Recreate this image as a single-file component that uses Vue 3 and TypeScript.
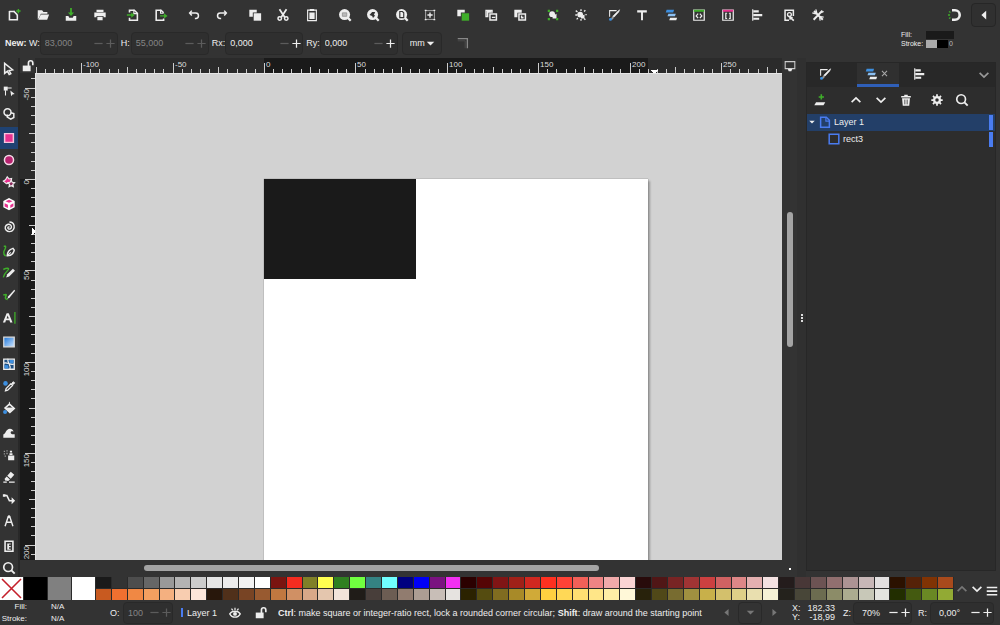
<script setup lang="ts">
import { computed, onBeforeUnmount, onMounted, ref } from 'vue'

const G = '#3fae2a'
const B = '#3d8fe0'
const P = '#e8318f'

const icons: Record<string, string> = {
  new: `<path d="M2.5 4h6M2.8 3.5v10h9v-6" fill="none" stroke="currentColor" stroke-width="1.8"/><path d="M7.5 3.5l4.3 4.3" stroke="currentColor" stroke-width="1.8"/><path d="M13 1v5M10.5 3.5h5" stroke="${G}" stroke-width="1.6"/>`,
  open: `<path d="M2 2.5h5l1.500 2H13v2H5.500L3.500 11 2 13z"/><path d="M5.500 7.500H15l-2.200 6H2.500z"/>`,
  save: `<path d="M7 0h2v5h2.500L8 9 4.500 5H7z" fill="${G}"/><path d="M2 9h3l1 2h4l1-2h3v5.500H2z"/>`,
  print: `<path d="M4 2h8v2.500H4zM1.500 5.200h13v5.300H12V9H4v1.500H1.500zM5 10h6v4H5z"/>`,
  import: `<path d="M4 5V2.500h5.500L13 6v8H4v-3" fill="none" stroke="currentColor" stroke-width="1.800"/><path d="M9 2v4.500h4" fill="none" stroke="currentColor" stroke-width="1.300"/><path d="M1 7.200h5V5l4 3-4 3V8.800H1z" fill="${G}"/>`,
  export: `<path d="M11 5.500L8 2.500H2.500V14H11v-2" fill="none" stroke="currentColor" stroke-width="1.800"/><path d="M7.500 2v4h3.500" fill="none" stroke="currentColor" stroke-width="1.300"/><path d="M7 8.200h4.500V6l4 3-4 3V9.800H7z" fill="${G}"/>`,
  undo: `<path d="M5.500 3L3 5.800l2.500 2.800M3.500 5.800h6.500a2.800 2.800 0 0 1 0 6.200H9" fill="none" stroke="currentColor" stroke-width="1.700"/>`,
  redo: `<path d="M10.500 3L13 5.800l-2.500 2.800M12.500 5.800H6a2.800 2.800 0 0 0 0 6.200h1" fill="none" stroke="currentColor" stroke-width="1.700"/>`,
  copy: `<path d="M1.500 2h8.500v3H5.500v5h-4z"/><path d="M6.500 6H15v8.500H6.500z"/>`,
  cut: `<path d="M4 1.500l6 9M12 1.500l-6 9" stroke="currentColor" stroke-width="2"/><circle cx="4.300" cy="12" r="2" fill="none" stroke="currentColor" stroke-width="1.700"/><circle cx="11.700" cy="12" r="2" fill="none" stroke="currentColor" stroke-width="1.700"/>`,
  paste: `<path d="M3 2.500h10v12H3z" fill="none" stroke="currentColor" stroke-width="1.300"/><path d="M5.500 1h5v2.500h-5zM5 5h6v7.500H5z"/>`,
  zoomSel: `<circle cx="7.500" cy="7.500" r="6.300"/><path d="M11 11l3.500 3.500" stroke="currentColor" stroke-width="2.600"/><path d="M5 5.500h5v4H5z" fill="#bbb" stroke="#888" stroke-width=".8"/>`,
  zoomDraw: `<circle cx="7.500" cy="7.500" r="6.300"/><path d="M11 11l3.500 3.500" stroke="currentColor" stroke-width="2.600"/><path d="M4 8l3-3.500h3.500L9 8l1.500.500L8 11.500 7 9z" fill="#333"/>`,
  zoomPage: `<circle cx="7.500" cy="7.500" r="6.300"/><path d="M11 11l3.500 3.500" stroke="currentColor" stroke-width="2.600"/><path d="M5.500 4h3l1.500 1.500V11H5.500z" fill="none" stroke="#333" stroke-width="1.300"/>`,
  zoomCenter: `<path d="M3 3h10v10H3z" fill="none" stroke="#bbb" stroke-width="1"/><path d="M8 5v6M5 8h6" stroke="currentColor" stroke-width="1.600"/><path d="M2 2h2v1.500H2zM12 2h2v1.500h-2zM2 12.500h2V14H2zM12 12.500h2V14h-2z"/>`,
  dup: `<path d="M1.500 2H10v3H5.500v4.500h-4z"/><path d="M6.500 6H15v8.500H6.500z" fill="${G}"/>`,
  clone: `<path d="M1.500 2H10v3.500H9V3.500H3V9h2v1.500H1.500z"/><path d="M6.800 6.800h7.400v7H6.800z" fill="none" stroke="currentColor" stroke-width="1.700"/><path d="M9 10h4v1.500H9zM3 3.500h6v2H5V9H3z"/>`,
  unclone: `<path d="M1.500 2H10v3.500H5V10.500H1.500z"/><path d="M6.800 6.800h7.400v7H6.800z" fill="none" stroke="currentColor" stroke-width="1.700"/><path d="M9 8.500h1.500V10H12v2H9z"/>`,
  group: `<circle cx="7" cy="7" r="3.300"/><path d="M7.500 9L12 6.500v5.500H7.500z"/><path d="M2 2h2.500v2.500H2zM11.500 2H14v2.500h-2.500zM2 11.500h2.500V14H2zM11.500 11.500H14V14h-2.500z" fill="${G}"/>`,
  ungroup: `<circle cx="7" cy="7.500" r="3.300"/><path d="M8 9l4-1.500V12H8z"/><path d="M2 3l2 1.500M8 1.500v2M13 2.500L11.500 4M1.500 8h2M3 13l1.500-1.500M8 12.500v2M13 13.500L11.500 12M14.500 7.500H13" stroke="currentColor" stroke-width="1.500"/>`,
  fill: `<path d="M3 10V3h8" fill="none" stroke="currentColor" stroke-width="1.200"/><path d="M14.500 2l-1 2.500-5.500 6-1.500-1 6-6z" stroke="currentColor" stroke-width=".6"/><path d="M6 9.500l2 1.500-2 2.500H4z" fill="#999"/><circle cx="4" cy="13" r="1.700" fill="${B}"/>`,
  text: `<path d="M2.500 2.500h11V5H9.100v9H6.900V5H2.500z"/>`,
  layers: `<path d="M3 2h8.500l-1 3H2z" fill="${B}"/><path d="M5 6.500h8.500l-1 3H4z" fill="#8cc0f2"/><path d="M7 11h8l-1 3H6z"/>`,
  xml: `<path d="M2 2.500h12v11.500H2z" fill="none" stroke="currentColor" stroke-width="1.400"/><path d="M2 2h12v2.300H2z" fill="${G}"/><path d="M7 6.500L4.800 9 7 11.500M9 6.500L11.200 9 9 11.500" fill="none" stroke="currentColor" stroke-width="1.400"/>`,
  selectors: `<path d="M2 2.500h12v11.500H2z" fill="none" stroke="currentColor" stroke-width="1.400"/><path d="M2 2h12v2.300H2z" fill="${P}"/><path d="M7 6H5.500v6H7M9 6h1.500v6H9" fill="none" stroke="currentColor" stroke-width="1.400"/>`,
  align: `<path d="M2.500 1.500h1.300v13H2.500zM4 2.500h6V5H4zM4 6.800h10v2.500H4zM4 11h6.500v2.500H4z"/>`,
  docprops: `<path d="M13 9V2.500H3.500V14H8" fill="none" stroke="currentColor" stroke-width="1.700"/><circle cx="8.500" cy="7.500" r="2.200" fill="none" stroke="currentColor" stroke-width="1.500"/><path d="M8 9.500l5.500 5M8.500 13l3.500-2.500" stroke="currentColor" stroke-width="1.900"/>`,
  prefs: `<path d="M3.500 3.500l10 10M13 3L3 13.500" stroke="currentColor" stroke-width="2.300"/><path d="M1.500 5.500L5 6.500 6.500 5l-1-3.500M14.500 4l-3 1.500M14.500 10.500L11 10l-1 1.500.5 3" fill="none" stroke="currentColor" stroke-width="1.400"/>`,
  snap: `<path d="M6 3.300h3a4.700 4.700 0 0 1 0 9.400H6" fill="none" stroke="currentColor" stroke-width="2.600"/><path d="M3 4.500l1.500 1M3 11.500l1.500-1M2 8h2" stroke="${G}" stroke-width="1.300"/>`,
  left: `<path d="M10.500 3v10L5 8z"/>`,
  selector: `<path d="M3 1.500v11.500l3.200-2.600 2 4 1.900-1-2-3.700 4-.8z" fill="none" stroke="currentColor" stroke-width="1.700"/>`,
  node: `<path d="M2 3h4.500v4.500H2z"/><path d="M6 4.500h5M4 7v6" stroke="currentColor" stroke-width="1.200"/><path d="M9.500 7.500l5 4-2.600.4L10.500 14z"/>`,
  shapeb: `<circle cx="6.300" cy="6" r="4" fill="none" stroke="currentColor" stroke-width="1.700"/><path d="M10 6.500l3.500 1v4.500L10 14l-4-2.500V8.500" fill="none" stroke="currentColor" stroke-width="1.700"/>`,
  rect: `<path d="M3 3h10v10H3z" fill="${P}" stroke="#f7c4de" stroke-width="1.700"/>`,
  ellipse: `<circle cx="8" cy="8" r="5.200" fill="#b8236f" stroke="#f5dbe8" stroke-width="1.700"/>`,
  star: `<path d="M6 2l2 2.500 3-.5-.5 3-2 2.500-3.500.5-3.500-3 2.500-1.500z" fill="${P}" stroke="currentColor" stroke-width="1.300"/><path d="M10.500 6l1.200 2.300 2.600.4-1.900 1.900.5 2.700-2.400-1.200-2.400 1.200.5-2.700-1.900-1.900 2.600-.4z" fill="#8c2a5c" stroke="currentColor" stroke-width="1.400"/>`,
  box: `<path d="M8 1.200l6.500 3.300v7.200L8 15l-6.500-3.300V4.500z" fill="#fff"/><path d="M8 3l4 1.800-4 1.900-4-1.900zM3 7l3.800 1.800v3.700L3 10.800zM9.500 9L13 7v3.600l-3.500 2z" fill="${P}"/>`,
  spiral: `<path d="M8.500 8.300a1 1 0 0 0-1.700 0c-.6 1.500 1 2.500 2.300 2 2-.7 2.200-3.300.7-4.600-2-1.600-5.200-.6-6 2-.8 3.200 1.900 5.800 5 5.600 3.600-.2 5.800-3.600 5-7-.5-2.200-2.600-4-5.300-4" fill="none" stroke="currentColor" stroke-width="1.600"/>`,
  pen: `<path d="M2 2.500h2.500M4 2.500c1 3-2 4-2 7s1 4 2.500 4" fill="none" stroke="${G}" stroke-width="1.600"/><path d="M6 13.500c0-4 2-7 6.500-8.500l1.500 2c-1 4.500-3.500 6.500-8 6.500z" fill="none" stroke="currentColor" stroke-width="1.700"/><path d="M6 13.500l4-4" stroke="currentColor" stroke-width="1.300"/>`,
  pencil: `<path d="M1.500 4c4-2 8-2 5 1s-4 4-5 8" fill="none" stroke="${G}" stroke-width="1.600"/><path d="M12.500 3l2.300 2.300-6.600 6.600-3.400 1.300L6 9.500z"/>`,
  calligraphy: `<path d="M1.500 8c3-1 4-1 3 1s-1 4 2 4" fill="none" stroke="${G}" stroke-width="1.800"/><path d="M14 2l1 1-6.200 7.800L6 12.500l1.200-3z"/>`,
  textTool: `<path d="M1 13L5.300 2.500h2.400L12 13H9.300l-.8-2.300H4.500L3.700 13zM5.200 8.700h2.600L6.500 5z"/><path d="M14 1h1.500v13.500H14z" fill="${G}"/>`,
  gradient: `<defs><linearGradient id="gradientTool" x1="0" y1="0" x2="1" y2="1"><stop offset="0" stop-color="#1c75d8"/><stop offset="1" stop-color="#cfe6ff"/></linearGradient></defs><path d="M2 2.500h12v11H2z" fill="url(#gradientTool)" stroke="#ddd" stroke-width="1.400"/>`,
  mesh: `<path d="M2 2.500h12v11.500H2z" fill="#1d4f82" stroke="currentColor" stroke-width="1.500"/><path d="M8.500 3.500H13V7L9 7.500zM3 9l4 .5L7.500 13H3z" fill="${B}"/><path d="M2 7c4-2 7 3 12 1M7 2c-2 4 4 7 2 12" fill="none" stroke="currentColor" stroke-width="1.400"/>`,
  dropper: `<circle cx="4" cy="5" r="2.600" fill="${B}"/><path d="M13 3l1.500 1.500-2 2L11 5z" stroke="currentColor"/><path d="M10 5.500l2 2-5.500 5.300-2.500.7.700-2.500z" fill="none" stroke="currentColor" stroke-width="1.500"/>`,
  bucket: `<path d="M8.500 3.500L14 8.500 9 13 3.500 8z" fill="none" stroke="currentColor" stroke-width="1.800"/><path d="M8.500 1v4M4 8h9l-4 4z" stroke="currentColor"/><circle cx="3.500" cy="12.500" r="2.300" fill="${B}"/>`,
  tweak: `<path d="M1.500 13.500V9.500C4 9.500 4.500 3 9 3c2.500 0 4 1.500 4 3.500-1.500-1-3.500-.5-3 1.500.5 1.500 2 1.500 4.500 1.500v4z"/>`,
  spray: `<path d="M7 8.500h7V14H7zM8.500 6H12v2H8.500zM9 3h2.500v2H9z"/><path d="M2 3h1.500v1.500H2zM5 2.500h1.500V4H5zM2 6h1.500v1.500H2zM5 5.500h1.500V7H5zM3 8.500h1.500V10H3z" fill="#999"/>`,
  eraser: `<path d="M10 2l4 3.500-4 4.500-4-3.500zM5.300 7.300l3.800 3.500-2 1.700-3.600-.5-.5-2zM1.500 13h4v1.500h-4zM8 13h6.500v1.500H8z"/>`,
  connector: `<path d="M2 4h3.500l3 6H13" fill="none" stroke="currentColor" stroke-width="1.900"/><path d="M1 2.500h3v3H1zM11 6l4 4-4 4z"/>`,
  measure: `<path d="M3.500 14L7 3.500h2L12.500 14M5 9.500h6" fill="none" stroke="currentColor" stroke-width="1.600"/><circle cx="8" cy="3" r="1.500"/>`,
  page: `<path d="M3.500 2.500h9V14h-9z" fill="none" stroke="currentColor" stroke-width="1.800"/><path d="M6 5h4v1.300H8V8h2v1.300H8V11h2v1.300H6z"/>`,
  zoom: `<circle cx="7" cy="7" r="5" fill="none" stroke="currentColor" stroke-width="1.900"/><path d="M10.500 10.500L14.500 14.500" stroke="currentColor" stroke-width="2.200"/>`,
  lock: `<path d="M2 7.500h9V14H2z"/><path d="M8.500 8V4.500a2.500 2.500 0 0 1 5 0V7" fill="none" stroke="currentColor" stroke-width="1.900"/>`,
  monitor: `<path d="M2.500 3h11v8h-11z" fill="none" stroke="#ccc" stroke-width="1.200"/><path d="M5.500 11.500h5L9.500 14h-3z"/>`,
  addLayer: `<path d="M3.500 10.500H14l-2 3.500H1.500z"/><path d="M9.500 1.500v6M6.500 4.500h6" stroke="${G}" stroke-width="1.800"/>`,
  up: `<path d="M3 10.500L8 5.500l5 5" fill="none" stroke="currentColor" stroke-width="1.900"/>`,
  down: `<path d="M3 5.500l5 5 5-5" fill="none" stroke="currentColor" stroke-width="1.900"/>`,
  trash: `<path d="M2.500 3.500H6V2h4v1.500h3.500V5h-11zM3.500 6h9l-.8 8.500H4.300z"/><path d="M6.300 7.500v5.500M8 7.500v5.500M9.700 7.500v5.500" stroke="#444" stroke-width=".7"/>`,
  gear: `<circle cx="8" cy="8" r="3.300" fill="none" stroke="currentColor" stroke-width="2.600"/><path d="M8 1.500v2.500M8 12v2.500M1.500 8H4M12 8h2.500M3.400 3.400l1.800 1.800M10.800 10.800l1.800 1.800M12.600 3.400l-1.800 1.800M5.200 10.800l-1.800 1.800" stroke="currentColor" stroke-width="2"/>`,
  layerPage: `<path d="M3 2.500h6.500L13 6v8H3z" fill="none" stroke="#4a7cf0" stroke-width="1.700"/><path d="M9 2.500V7h4" fill="none" stroke="#4a7cf0" stroke-width="1.300"/>`,
  rectObj: `<path d="M2.500 2.500h11v11h-11z" fill="none" stroke="#4a7cf0" stroke-width="1.700"/>`,
  triDown: `<path d="M2.500 5.500h11L8 11z"/>`,
  triLeft: `<path d="M11 3v10L5 8z"/>`,
  triRight: `<path d="M5 3v10l6-5z"/>`,
  eye: `<path d="M2 9c2.500-4 9.500-4 12 0-2.500 5-9.500 5-12 0z" fill="none" stroke="currentColor" stroke-width="1.500"/><circle cx="8" cy="9" r="2.200"/><path d="M4 3l1.500 2M8 2v2.500M12 3l-1.500 2" stroke="currentColor" stroke-width="1.400"/>`,
  menu: `<path d="M2 3h12v1.800H2zM2 7.200h12V9H2zM2 11.400h12v1.800H2z"/>`,
  corner: `<path d="M2 3h11v11" fill="none" stroke="currentColor" stroke-width="1.500"/><path d="M2 5.500h8.500V14" fill="none" stroke="#555" stroke-width=".8"/>`,
  close: `<path d="M3.500 3.500l9 9M12.500 3.500l-9 9" stroke="currentColor" stroke-width="1.900"/>`,
  plus: `<path d="M8 2v12M2 8h12" stroke="currentColor" stroke-width="1.800"/>`,
  minus: `<path d="M2 8h12" stroke="currentColor" stroke-width="1.800"/>`,
}

const commandGroups: string[][] = [
  ['new', 'open', 'save', 'print'],
  ['import', 'export'],
  ['undo', 'redo'],
  ['copy', 'cut', 'paste'],
  ['zoomSel', 'zoomDraw', 'zoomPage', 'zoomCenter'],
  ['dup', 'clone', 'unclone'],
  ['group', 'ungroup'],
  ['fill', 'text', 'layers', 'xml', 'selectors', 'align'],
  ['docprops', 'prefs'],
]

const toolGroups: string[][] = [
  ['selector', 'node', 'shapeb'],
  ['rect', 'ellipse', 'star', 'box', 'spiral'],
  ['pen', 'pencil', 'calligraphy', 'textTool'],
  ['gradient', 'mesh', 'dropper', 'bucket'],
  ['tweak', 'spray', 'eraser', 'connector', 'measure'],
  ['page', 'zoom'],
]
const activeTool = ref('rect')

const fields = ref([
  { id: 'w', label: 'W:', value: '83,000', off: true },
  { id: 'h', label: 'H:', value: '55,000', off: true },
  { id: 'rx', label: 'Rx:', value: '0,000', off: false },
  { id: 'ry', label: 'Ry:', value: '0,000', off: false },
])

const opacity = ref('100')
const zoomLevel = ref('70%')
const rotation = ref('0,00°')

const PX_PER_MM = 1.828
interface Tick { pos: number; size: number; label: string }
function ticks(origin: number, length: number): Tick[] {
  const out: Tick[] = []
  const first = Math.ceil(-origin / PX_PER_MM / 5) * 5
  for (let mm = first; origin + mm * PX_PER_MM < length; mm += 5) {
    const pos = Math.round(origin + mm * PX_PER_MM)
    const major = mm % 50 === 0
    out.push({
      pos,
      size: major ? 10 : mm % 25 === 0 ? 6 : 4,
      label: major && pos + 14 <= length ? String(mm) : '',
    })
  }
  return out
}
const canvas = ref<HTMLElement | null>(null)
const size = ref({ w: 0, h: 0 })
const hTicks = computed(() => ticks(229, size.value.w))
const vTicks = computed(() => ticks(106, size.value.h))
function measure() {
  if (canvas.value) size.value = { w: canvas.value.offsetWidth, h: canvas.value.offsetHeight }
}
onMounted(() => {
  measure()
  window.addEventListener('resize', measure)
})
onBeforeUnmount(() => window.removeEventListener('resize', measure))

const bigSwatches = ['#000000', '#808080', '#ffffff']
const topRow = (
  '1a1a1a 333333 4d4d4d 666666 999999 b3b3b3 cccccc e6e6e6 ececec f2f2f2 ffffff ' +
  '7a1410 f52c20 808028 ffff50 2f8020 70ff40 348282 70ffff 000080 0000f8 7a1280 f230f2 ' +
  '2b0000 550505 801515 a02018 d02820 ff3020 ff4236 f26058 ee8484 f0aaaa fad4d4 ' +
  '280b0b 501616 782424 a03434 cc4040 d06262 de8787 e4b0b0 f4e2e2 ' +
  '241c1c 483737 6c5353 916f6f ac9393 c8b7b7 e3e0e0 2b1100 552208 803304 a84a1c'
).split(' ')
const bottomRow = (
  'c85a20 f07030 f08844 f4a060 f4b080 f8cdb0 fce6da 28170b 50301a 784424 985a30 c07840 d09064 d8a888 e4c6ae f2e4da ' +
  '201c18 483e3a 6c5d53 917c6f ac9d93 c8beb7 e6e3e0 ' +
  '2b2200 554c10 806c20 a88a28 d0aa38 ffd040 ffd856 ffdf72 ffe688 ffeea6 fff8d8 ' +
  '28220b 504818 786c30 a09040 c8b04a d3c06c decf88 e9dfaf f6f2d6 ' +
  '24221c 484638 6c6c50 8c8c68 acac90 c8c8b8 e4e4e0 222e00 445a10 6a8824 92aa34'
).split(' ')
</script>

<template>
  <div class="app">
    <header class="commands">
      <nav class="command-groups" aria-label="Commands">
        <div v-for="(group, i) in commandGroups" :key="i" class="command-group" :style="{ flexGrow: group.length }">
          <button v-for="name in group" :key="name" class="icon-btn" :aria-label="name">
            <svg class="icon" viewBox="0 0 16 16" v-html="icons[name]" />
          </button>
        </div>
      </nav>
      <button class="icon-btn snap" aria-label="Snapping"><svg class="icon big" viewBox="0 0 16 16" v-html="icons.snap" /></button>
      <button class="icon-btn boxed" aria-label="Snap options"><svg class="icon" viewBox="0 0 16 16" v-html="icons.left" /></button>
    </header>

    <section class="controls">
      <b class="new">New:</b>
      <div v-for="f in fields" :key="f.id" class="field" :class="{ off: f.off }">
        <label :for="f.id">{{ f.label }}</label>
        <div class="spin">
          <input :id="f.id" v-model="f.value" type="text" :disabled="f.off" />
          <button class="dim" aria-label="Decrease"><svg class="step" viewBox="0 0 16 16" v-html="icons.minus" /></button>
          <button :disabled="f.off" aria-label="Increase"><svg class="step" viewBox="0 0 16 16" v-html="icons.plus" /></button>
        </div>
      </div>
      <div class="unit">
        <select aria-label="Unit"><option>mm</option><option>px</option></select>
        <svg class="unit-arrow" viewBox="0 0 16 16" v-html="icons.triDown" />
      </div>
      <button class="icon-btn corner" aria-label="Not rounded"><svg class="icon" viewBox="0 0 16 16" v-html="icons.corner" /></button>
      <div class="style-box">
        <span>Fill:</span><i class="sw-fill"></i>
        <span>Stroke:</span><span class="sw-stroke"><i class="sw-light"></i><i class="sw-dark"></i>0</span>
      </div>
    </section>

    <main class="body">
      <nav class="toolbox" aria-label="Tools">
        <div v-for="(group, i) in toolGroups" :key="i" class="tool-group" :style="{ flexGrow: group.length }">
          <button v-for="name in group" :key="name" class="tool" :class="{ active: activeTool === name }" :aria-label="name" @click="activeTool = name">
            <svg class="icon" viewBox="0 0 16 16" v-html="icons[name]" />
          </button>
        </div>
      </nav>

      <div class="work">
        <button class="icon-btn guide-lock" aria-label="Lock guides"><svg class="icon" viewBox="0 0 16 16" v-html="icons.lock" /></button>
        <svg class="ruler" shape-rendering="crispEdges">
          <rect x="229" y="0" width="384" height="15" fill="#1a1a1a" />
          <g v-for="t in hTicks" :key="t.pos">
            <rect :x="t.pos" :y="15 - t.size" width="1" :height="t.size" fill="#ccc" />
            <text v-if="t.label" :x="t.pos + 2" y="9">{{ t.label }}</text>
          </g>
          <path d="M615 12h9l-4.500 4z" fill="#fff" />
        </svg>
        <button class="icon-btn" aria-label="Display"><svg class="icon" viewBox="0 0 16 16" v-html="icons.monitor" /></button>

        <svg class="ruler" shape-rendering="crispEdges">
          <rect x="0" y="106" width="15" height="543" fill="#1a1a1a" />
          <g v-for="t in vTicks" :key="t.pos">
            <rect :x="15 - t.size" :y="t.pos" :width="t.size" height="1" fill="#ccc" />
            <text v-if="t.label" text-anchor="end" :transform="`translate(9 ${t.pos + 1}) rotate(-90)`">{{ t.label }}</text>
          </g>
          <path d="M12 154v9l4-4.500z" fill="#fff" />
        </svg>
        <div ref="canvas" class="canvas">
          <div class="sheet"><div class="shape"></div></div>
        </div>
        <div class="vscroll"><div class="vthumb"></div></div>

        <span></span>
        <div class="hscroll"><div class="hthumb"></div></div>
        <div class="cms"><i></i></div>
      </div>

      <div class="grip"><i></i><i></i><i></i></div>

      <aside class="dock">
        <div class="tabs">
          <button class="tab" aria-label="Fill and Stroke"><svg class="icon" viewBox="0 0 16 16" v-html="icons.fill" /></button>
          <button class="tab active" aria-label="Layers and Objects">
            <svg class="icon" viewBox="0 0 16 16" v-html="icons.layers" />
            <svg class="close" viewBox="0 0 16 16" v-html="icons.close" />
          </button>
          <button class="tab last" aria-label="Align"><svg class="icon" viewBox="0 0 16 16" v-html="icons.align" /></button>
          <button class="tab-more" aria-label="More"><svg class="icon" viewBox="0 0 16 16" v-html="icons.down" /></button>
        </div>
        <div class="layer-tools">
          <button class="icon-btn lt-add" aria-label="Add layer"><svg class="icon" viewBox="0 0 16 16" v-html="icons.addLayer" /></button>
          <button class="icon-btn" aria-label="Raise"><svg class="icon" viewBox="0 0 16 16" v-html="icons.up" /></button>
          <button class="icon-btn" aria-label="Lower"><svg class="icon" viewBox="0 0 16 16" v-html="icons.down" /></button>
          <button class="icon-btn" aria-label="Delete"><svg class="icon" viewBox="0 0 16 16" v-html="icons.trash" /></button>
          <button class="icon-btn lt-gear" aria-label="Settings"><svg class="icon" viewBox="0 0 16 16" v-html="icons.gear" /></button>
          <button class="icon-btn" aria-label="Search"><svg class="icon" viewBox="0 0 16 16" v-html="icons.zoom" /></button>
        </div>
        <ul class="tree">
          <li class="selected">
            <svg class="expander" viewBox="0 0 16 16" v-html="icons.triDown" />
            <svg class="icon" viewBox="0 0 16 16" v-html="icons.layerPage" />
            <span>Layer 1</span><i></i>
          </li>
          <li class="child">
            <svg class="icon" viewBox="0 0 16 16" v-html="icons.rectObj" />
            <span>rect3</span><i></i>
          </li>
        </ul>
      </aside>
    </main>

    <section class="palette">
      <button class="none" aria-label="None">
        <svg viewBox="0 0 23 23"><path d="M2 2l19 19M21 2L2 21" stroke="#c4202c" stroke-width="1.600" /></svg>
      </button>
      <button v-for="c in bigSwatches" :key="c" class="big-swatch" :aria-label="c" :style="{ background: c }"></button>
      <div class="swatches">
        <button v-for="(c, i) in topRow" :key="'t' + i" :aria-label="c" :style="{ background: '#' + c }"></button>
        <button v-for="(c, i) in bottomRow" :key="'b' + i" :aria-label="c" :style="{ background: '#' + c }"></button>
      </div>
      <div class="palette-nav">
        <button class="icon-btn faded" aria-label="Scroll up"><svg class="icon" viewBox="0 0 16 16" v-html="icons.up" /></button>
        <button class="icon-btn" aria-label="Scroll down"><svg class="icon" viewBox="0 0 16 16" v-html="icons.down" /></button>
        <button class="icon-btn pmenu" aria-label="Palette menu"><svg class="icon" viewBox="0 0 16 16" v-html="icons.menu" /></button>
      </div>
    </section>

    <footer class="status">
      <div class="paint"><span>Fill:</span><span>N/A</span><span>Stroke:</span><span>N/A</span></div>
      <label class="o-label" for="opacity">O:</label>
      <div class="spin o-spin off">
        <input id="opacity" v-model="opacity" type="text" disabled />
        <button disabled aria-label="Decrease"><svg class="step" viewBox="0 0 16 16" v-html="icons.minus" /></button>
        <button disabled aria-label="Increase"><svg class="step" viewBox="0 0 16 16" v-html="icons.plus" /></button>
      </div>
      <button class="layer-btn"><i></i>Layer 1</button>
      <button class="icon-btn eye" aria-label="Toggle visibility"><svg class="icon" viewBox="0 0 16 16" v-html="icons.eye" /></button>
      <button class="icon-btn s-lock" aria-label="Toggle lock"><svg class="icon" viewBox="0 0 16 16" v-html="icons.lock" /></button>
      <p class="message"><b>Ctrl</b>: make square or integer-ratio rect, lock a rounded corner circular; <b>Shift</b>: draw around the starting point</p>
      <div class="pager">
        <button class="icon-btn" aria-label="Previous page"><svg class="icon small" viewBox="0 0 16 16" v-html="icons.triLeft" /></button>
        <button class="icon-btn pages" aria-label="Pages"><svg class="icon small" viewBox="0 0 16 16" v-html="icons.triDown" /></button>
        <button class="icon-btn" aria-label="Next page"><svg class="icon small" viewBox="0 0 16 16" v-html="icons.triRight" /></button>
      </div>
      <div class="coords"><span>X:</span><span>182,33</span><span>Y:</span><span>-18,99</span></div>
      <label class="z-label" for="zoom">Z:</label>
      <div class="spin z-spin">
        <input id="zoom" v-model="zoomLevel" type="text" />
        <button aria-label="Zoom out"><svg class="step" viewBox="0 0 16 16" v-html="icons.minus" /></button>
        <button aria-label="Zoom in"><svg class="step" viewBox="0 0 16 16" v-html="icons.plus" /></button>
      </div>
      <label class="r-label" for="rotation">R:</label>
      <div class="spin r-spin">
        <input id="rotation" v-model="rotation" type="text" />
        <button aria-label="Rotate left"><svg class="step" viewBox="0 0 16 16" v-html="icons.minus" /></button>
        <button aria-label="Rotate right"><svg class="step" viewBox="0 0 16 16" v-html="icons.plus" /></button>
      </div>
    </footer>
  </div>
</template>

<style>
body { margin: 0; background: #333; }
</style>

<style scoped>
.app, .app * { box-sizing: border-box; }
.app {
  display: flex;
  flex-direction: column;
  height: 100vh;
  overflow: hidden;
  background: #333;
  color: #eee;
  font: 9px/12px "Liberation Sans", Arial, sans-serif;
}
button, input, select { font: inherit; color: inherit; border: 0; padding: 0; margin: 0; background: none; min-width: 0; }
svg { display: block; fill: currentColor; flex: none; }
.icon { width: 14px; height: 14px; }
.icon.small { width: 11px; height: 11px; }
.icon.big { width: 16px; height: 16px; }
.icon-btn { display: flex; align-items: center; justify-content: center; }

.commands { display: flex; height: 29px; padding-right: 4px; }
.command-groups { display: flex; gap: 4px; width: 832px; }
.command-group { display: flex; flex-basis: 0; }
.command-group .icon-btn { flex: 1; }
.snap { width: 28px; margin-left: auto; }
.boxed { width: 25px; height: 24px; margin: 3px 0 0 3px; border: 1px solid #262626; border-radius: 4px; background: #303030; }

.controls { display: flex; align-items: center; gap: 3px; height: 29px; padding: 0 46px 1px 5px; }
.new { width: 21px; font-weight: 700; }
.field { display: flex; align-items: center; }
.field label { min-width: 10px; }
.spin { display: flex; align-items: center; width: 78px; height: 23px; border: 1px solid #292929; border-radius: 4px; background: #2f2f2f; }
.spin input { flex: 1; width: 0; padding-left: 4px; outline: 0; }
.spin button { display: flex; align-items: center; justify-content: center; width: 12px; height: 100%; }
.step { width: 11px; height: 11px; }
.off .spin, .spin.off { color: #858585; }
.off .spin button, .spin.off button, .dim { color: #5c5c5c; }
.faded { color: #777; }
.unit { position: relative; height: 23px; width: 40px; margin-left: 1px; }
.unit select { appearance: none; width: 100%; height: 100%; padding-left: 7px; border: 1px solid #292929; border-radius: 4px; background: #303030; }
.unit-arrow { position: absolute; right: 6px; top: 6px; width: 11px; height: 11px; pointer-events: none; }
.corner { margin-left: 11px; color: #888; }
.style-box { display: grid; grid-template-columns: 25px 28px; row-gap: 1px; align-items: center; margin-left: auto; padding-bottom: 8px; font-size: 7px; line-height: 8px; }
.sw-fill { height: 8px; background: #1a1a1a; }
.sw-stroke { display: flex; color: #bbb; }
.sw-light { width: 11px; height: 8px; background: #aaa; }
.sw-dark { width: 11px; height: 8px; margin-right: 1px; background: #000; }

.body { display: flex; flex: 1; min-height: 0; }
.toolbox { display: flex; flex-direction: column; gap: 2px; width: 20px; margin-bottom: -2px; border-right: 2px solid #282828; }
.tool-group { display: flex; flex-direction: column; flex-basis: 0; min-height: 0; }
.tool { display: flex; flex: 1; align-items: center; justify-content: center; min-height: 0; }
.tool.active { background: #1f4272; }

.work { display: grid; grid-template: 15px 1fr 17px / 15px 1fr 15px; flex: 1; min-width: 0; }
.ruler { width: 100%; height: 100%; min-height: 0; overflow: hidden; background: #2b2b2b; fill: #ddd; font-size: 8px; }
.canvas { position: relative; overflow: hidden; border: 1px solid #e6e6e6; border-width: 1px 0 0 1px; background: #d2d2d2; }
.sheet { position: absolute; left: 228px; top: 105px; width: 384px; height: 543px; background: #fff; box-shadow: 0 0 1px #666, 2px 2px 2px #999; }
.shape { width: 152px; height: 100px; background: #1a1a1a; }
.vscroll { display: flex; justify-content: center; padding-top: 139px; }
.vthumb { width: 6px; height: 135px; border-radius: 3px; background: #a4a4a4; }
.hscroll { display: flex; align-items: center; padding: 0 0 2px 109px; }
.hthumb { width: 455px; height: 6px; border-radius: 3px; background: #a4a4a4; }
.cms { display: flex; align-items: center; justify-content: center; }
.cms i { width: 2px; height: 2px; background: #fff; }
.grip { display: flex; flex-direction: column; align-items: center; justify-content: center; gap: 1px; width: 9px; background: #303030; }
.grip i { width: 2px; height: 2px; background: #ddd; }

.dock { width: 190px; margin: 4px 4px 6px 0; border: 1px solid #272727; background: #2d2d2d; }
.tabs { display: flex; height: 24px; background: #282828; }
.tab { display: flex; align-items: center; justify-content: center; gap: 2px; width: 42px; border-bottom: 3px solid transparent; }
.tab:first-child { width: 50px; padding-right: 14px; }
.tab.active { padding-right: 4px; background: #303030; border-bottom-color: #2f5fb8; }
.tab.last { padding-right: 2px; }
.close { width: 9px; height: 9px; color: #aaa; }
.tab-more { display: flex; align-items: center; justify-content: center; width: 22px; margin-left: auto; color: #999; }
.layer-tools { display: flex; height: 27px; padding-bottom: 1px; }
.layer-tools .icon-btn { width: 25px; }
.lt-add { margin-right: 11px; }
.layer-tools .lt-gear { margin-left: 6px; }
.tree { list-style: none; margin: 0; padding: 0; line-height: 11px; }
.tree li { display: flex; align-items: center; gap: 2px; height: 17px; padding: 0 2px 1px 1px; }
.tree li.child { padding-left: 20px; }
.tree .selected { background: #233f68; }
.tree i { width: 4px; height: 15px; margin-left: auto; background: #4a7cf0; }
.expander { width: 8px; height: 8px; }

.palette { display: flex; gap: 1px; height: 23px; background: #2a2a2a; }
.none { width: 23px; background: #fff; }
.none svg { width: 23px; height: 23px; }
.big-swatch { width: 23px; }
.swatches { display: grid; flex: 1; grid-template-columns: repeat(54, 1fr); grid-template-rows: 11px 11px; gap: 1px; }
.palette-nav { display: flex; width: 46px; background: #333; }
.palette-nav .icon-btn { width: 16px; }
.palette-nav .pmenu { padding-top: 4px; }

.status { display: flex; align-items: center; height: 25px; padding-right: 6px; white-space: nowrap; }
.paint { display: grid; grid-template-columns: 27px auto; justify-content: start; column-gap: 24px; width: 110px; font-size: 8px; line-height: 12px; }
.paint span:nth-child(odd) { justify-self: end; }
.spin.o-spin { width: 50px; }
.o-label { width: 13px; }
.status .spin { height: 22px; }
.layer-btn { display: flex; align-items: center; gap: 4px; width: 47px; margin-left: 8px; }
.layer-btn i { width: 2px; height: 9px; background: #4a7cf0; }
.eye { width: 14px; }
.s-lock { width: 14px; margin-left: 12px; }
.message { flex: 1; margin: 0 0 0 10px; min-width: 0; overflow: hidden; }
.pager { display: flex; align-items: center; color: #777; }
.pager .icon-btn { width: 24px; height: 22px; }
.pager .pages { border: 1px solid #292929; border-radius: 4px; }
.coords { display: grid; grid-template-columns: 9px 34px; margin-left: 6px; line-height: 9px; }
.coords span:nth-child(even) { justify-self: end; }
.z-label { margin-left: 8px; width: 10px; }
.spin.z-spin { width: 59px; }
.z-spin input, .r-spin input { padding-left: 8px; }
.r-label { margin-left: 6px; width: 12px; }
.spin.r-spin { width: 64px; }
</style>
